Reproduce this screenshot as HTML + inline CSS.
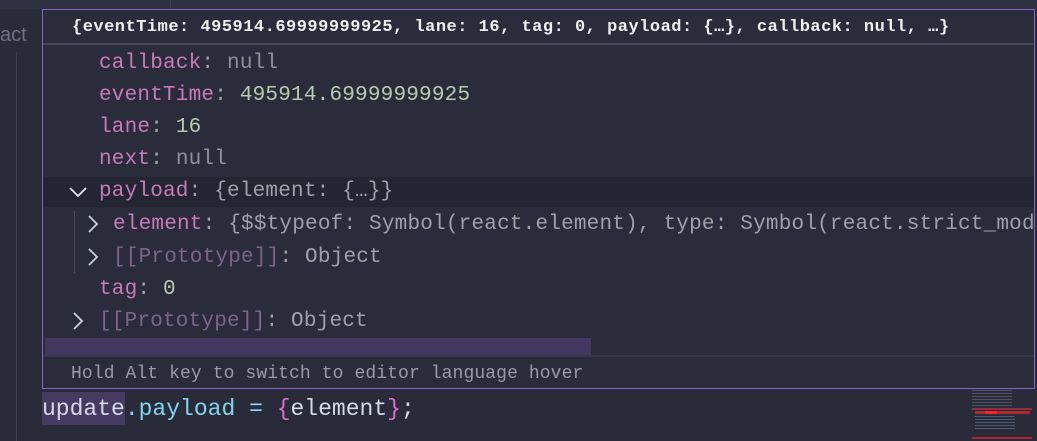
<!DOCTYPE html>
<html><head><style>
html,body{margin:0;padding:0;}
body{width:1037px;height:441px;overflow:hidden;background:#292b39;position:relative;font-family:"Liberation Mono",monospace;}
.abs{position:absolute;white-space:pre;}
.row{position:absolute;left:0;height:32px;line-height:32px;font-size:21px;letter-spacing:0.2px;white-space:pre;}
.k{color:#c87ab8}.n{color:#8f8f95}.g{color:#b5cea8}.v{color:#a0a0a6}.p{color:#7d6488}
.chev{position:absolute;width:20px;height:20px;}
</style></head><body>
<div class="abs" style="left:0;top:0;width:1037px;height:9px;background:#2f3142"></div>
<div class="abs" style="left:170px;top:0;width:1px;height:9px;background:#3c3e50"></div>
<div class="abs" style="left:0;top:24px;font-family:'Liberation Sans',sans-serif;font-size:20px;color:#6f7185">act</div>
<div class="abs" style="left:16px;top:52px;width:1px;height:389px;background:#3d3f52"></div>

<div class="abs" style="left:42px;top:9px;width:991px;height:378px;border:1px solid #8a62c9;background:#2a2c3c;overflow:hidden">
  <div class="abs" style="left:29px;top:6px;font-size:17px;font-weight:bold;color:#f0f0f0;letter-spacing:0.5px;line-height:24px">{eventTime: 495914.69999999925, lane: 16, tag: 0, payload: {…}, callback: null, …}</div>
  <div class="abs" style="left:0;top:33px;width:991px;height:2px;background:#44465a"></div>
  <div class="abs" style="left:0;top:167px;width:991px;height:30px;background:#242532"></div>
  <div class="row" style="top:38px;left:56px"><span class="k">callback</span><span class="v">: </span><span class="n">null</span></div>
  <div class="row" style="top:70px;left:56px"><span class="k">eventTime</span><span class="v">: </span><span class="g">495914.69999999925</span></div>
  <div class="row" style="top:102px;left:56px"><span class="k">lane</span><span class="v">: </span><span class="g">16</span></div>
  <div class="row" style="top:134px;left:56px"><span class="k">next</span><span class="v">: </span><span class="n">null</span></div>
  <div class="row" style="top:166px;left:56px"><span class="k">payload</span><span class="v">: {element: {…}}</span></div>
  <svg class="chev" style="left:25px;top:172px" viewBox="0 0 20 20"><path d="M2 6 L10 14 L18 6" stroke="#e8e8f0" stroke-width="1.8" fill="none"/></svg>
  <div class="abs" style="left:31px;top:201px;width:1px;height:62px;background:#4a4c5e"></div>
  <div class="row" style="top:199px;left:70px"><span class="k">element</span><span class="v">: {$$typeof: Symbol(react.element), type: Symbol(react.strict_mode), key</span></div>
  <svg class="chev" style="left:40px;top:204px" viewBox="0 0 20 20"><path d="M6 2 L14 10 L6 18" stroke="#c8d0e0" stroke-width="1.8" fill="none"/></svg>
  <div class="row" style="top:232px;left:70px"><span class="p">[[Prototype]]</span><span class="v">: Object</span></div>
  <svg class="chev" style="left:40px;top:237px" viewBox="0 0 20 20"><path d="M6 2 L14 10 L6 18" stroke="#c8d0e0" stroke-width="1.8" fill="none"/></svg>
  <div class="row" style="top:264px;left:56px"><span class="k">tag</span><span class="v">: </span><span class="g">0</span></div>
  <div class="row" style="top:296px;left:56px"><span class="p">[[Prototype]]</span><span class="v">: Object</span></div>
  <svg class="chev" style="left:25px;top:301px" viewBox="0 0 20 20"><path d="M6 2 L14 10 L6 18" stroke="#c8d0e0" stroke-width="1.8" fill="none"/></svg>
  <div class="abs" style="left:2px;top:328px;width:546px;height:17px;background:#453860"></div>
  <div class="abs" style="left:0;top:345px;width:991px;height:2px;background:#35374a"></div>
  <div class="abs" style="left:28px;top:352px;font-size:18px;color:#9a9ba3;line-height:24px;letter-spacing:0.1px">Hold Alt key to switch to editor language hover</div>
</div>

<div class="abs" style="left:42px;top:392px;width:83px;height:33px;background:#463a62"></div>
<div class="abs" style="left:42px;top:394px;font-size:23px;line-height:30px;color:#d4dae6">update<span style="color:#7fd6f2">.payload</span> <span style="color:#89ddff">=</span> <span style="color:#e06ad0">{</span>element<span style="color:#e06ad0">}</span>;</div>

<div class="abs" style="left:972px;top:390px;width:40px;height:20px;background:repeating-linear-gradient(#6a6e85 0 1px,transparent 1px 3px);opacity:.6"></div>
<div class="abs" style="left:972px;top:408px;width:60px;height:2px;background:#8a3040"></div>
<div class="abs" style="left:975px;top:411px;width:55px;height:3px;background:#b02630"></div>
<div class="abs" style="left:985px;top:411px;width:12px;height:3px;background:#ff2020"></div>
<div class="abs" style="left:975px;top:416px;width:40px;height:14px;background:repeating-linear-gradient(#5a7090 0 1px,transparent 1px 3px);opacity:.7"></div>
<div class="abs" style="left:972px;top:437px;width:60px;height:2px;background:#b02630"></div>
</body></html>
